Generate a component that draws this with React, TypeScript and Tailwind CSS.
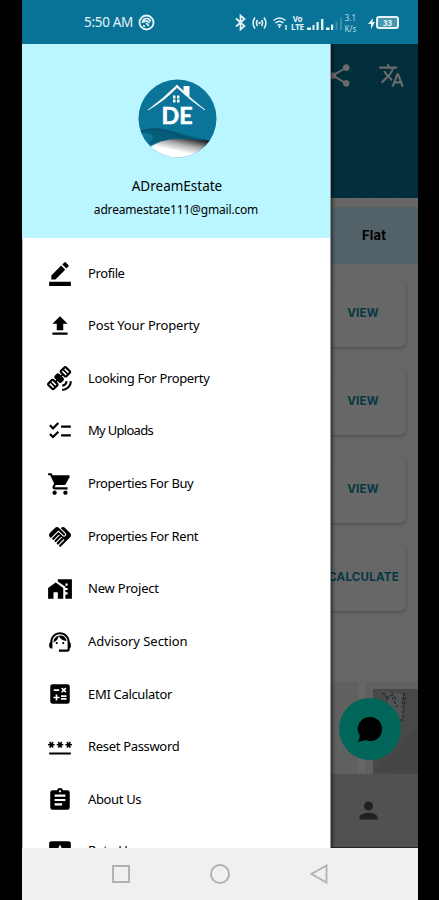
import type { ReactNode } from "react";
import type { IconType } from "react-icons";
import {
  MdBorderColor,
  MdUpload,
  MdSatelliteAlt,
  MdChecklist,
  MdShoppingCart,
  MdHandshake,
  MdHomeWork,
  MdSupportAgent,
  MdCalculate,
  MdPassword,
  MdAssignment,
  MdReviews,
  MdShare,
  MdTranslate,
  MdPerson,
} from "react-icons/md";

interface MenuItem {
  label: string;
  icon: IconType;
  tracking: string;
}

const menuItems: MenuItem[] = [
  { label: "Profile", icon: MdBorderColor, tracking: "tracking-[-0.4px]" },
  { label: "Post Your Property", icon: MdUpload, tracking: "tracking-[-0.15px]" },
  { label: "Looking For Property", icon: MdSatelliteAlt, tracking: "tracking-[-0.35px]" },
  { label: "My Uploads", icon: MdChecklist, tracking: "tracking-[-0.7px]" },
  { label: "Properties For Buy", icon: MdShoppingCart, tracking: "tracking-[-0.43px]" },
  { label: "Properties For Rent", icon: MdHandshake, tracking: "tracking-[-0.42px]" },
  { label: "New Project", icon: MdHomeWork, tracking: "tracking-[-0.2px]" },
  { label: "Advisory Section", icon: MdSupportAgent, tracking: "tracking-[-0.05px]" },
  { label: "EMI Calculator", icon: MdCalculate, tracking: "tracking-[-0.32px]" },
  { label: "Reset Password", icon: MdPassword, tracking: "tracking-[-0.32px]" },
  { label: "About Us", icon: MdAssignment, tracking: "tracking-[-0.35px]" },
  { label: "Rate Us", icon: MdReviews, tracking: "tracking-[-0.1px] pb-[3px]" },
];

const StatusBar = () => (
  <div className="relative h-11 w-full shrink-0 bg-[#087396] text-[#e6f3f6]">
    <div className="flex h-full items-center pt-[1px] pl-[62px]">
      <span className="w-[50px] text-[13.5px] tracking-[-0.3px] whitespace-nowrap">5:50 AM</span>
      <svg className="ml-[4px] size-[17px]" viewBox="0 0 17 17" fill="none" stroke="currentColor">
        <circle cx="8.5" cy="8.5" r="7" strokeWidth="1.8" />
        <path d="M4.500 9q0-4.500 4.500-4.500 3 0 3.500 3M5.500 8q3-2.500 6 1M8 9l3 3M5 11.500l2 1" strokeWidth="1.700" />
      </svg>
      <svg className="ml-[77px] size-[17px]" viewBox="0 0 17 17" fill="none" stroke="currentColor" strokeWidth="1.7">
        <path d="M4 4.500l8.500 7.500-4 3.500v-14l4 3.500L4 12.500" />
      </svg>
      <svg className="ml-[3px] h-[14px] w-[15px]" viewBox="0 0 15 14" fill="none" stroke="currentColor" strokeWidth="1.6">
        <path d="M3 1.5Q-.8 7 3 12.5M12 1.5Q15.800 7 12 12.500M5.500 4Q3.500 7 5.500 10M9.500 4Q11.500 7 9.500 10" />
        <circle cx="7.5" cy="7" r="1.2" fill="currentColor" stroke="none" />
      </svg>
      <svg className="ml-[6px] h-[14px] w-[15px]" viewBox="0 0 15 14" fill="none" stroke="currentColor" strokeWidth="1.4">
        <path d="M.5 4.500Q6.500-.5 12.500 4.500M2.500 7Q6.500 3.500 10.500 7M4.500 9.500Q6.500 8 8.500 9.500" />
        <path d="M6.500 10v2M13 9v5" />
      </svg>
      <div className="ml-[2px] w-[15px] text-center text-[8px] leading-[8px] font-bold tracking-[-0.2px]">
        <div>Vo</div>
        <div>LTE</div>
      </div>
      <svg className="mt-[2px] ml-[2px] h-[13px] w-[36px]" viewBox="0 0 36 13" fill="currentColor">
        <path d="M0 10.500h4V13H0zM5.500 8h2v5h-2zM9.500 5h2.200v8H9.500zM14 2h2.400v11H14zM19 10.500h3.500V13H19zM24 7.500h2.200V13H24z" />
        <path d="M28.500 4.500h2V13h-2zM33 1h2v12h-2z" opacity=".22" />
      </svg>
      <div className="w-[15px] text-center text-[8px] leading-[11px] opacity-80">
        <div>3.1</div>
        <div>K/s</div>
      </div>
      <svg className="ml-[10px] h-[14px] w-[8px]" viewBox="0 0 8 14" fill="currentColor">
        <path d="M5 2 0 8h3v5l4-7H4.500z" />
      </svg>
      <div className="flex h-[13px] w-[23px] items-center justify-center rounded-[3px] border-2 border-current bg-white/25 text-[8px] font-bold">
        33
      </div>
    </div>
  </div>
);

const Logo = () => (
  <svg className="ml-[2px] size-[79px]" viewBox="0 0 79 79">
    <defs>
      <clipPath id="badge">
        <circle cx="39.5" cy="39.5" r="39" />
      </clipPath>
      <linearGradient id="wave" x1="0.3" x2="1" y1="0.9" y2="0.1">
        <stop offset="0.3" stopColor="#fff" />
        <stop offset="0.6" stopColor="#aaa" />
        <stop offset="0.9" stopColor="#222" />
      </linearGradient>
    </defs>
    <g clipPath="url(#badge)">
      <rect width="79" height="79" fill="#0b7499" />
      <path d="M0 53Q14 46 34 52T79 63L70 68Q40 57 10 65Q24 54 0 53z" fill="#075c7a" />
      <path d="M3 52Q22 47 40 56T76 63" fill="none" stroke="#06506b" strokeWidth="1.2" />
      <path d="M10 69Q25 59 43 60T79 62V79H0z" fill="url(#wave)" />
    </g>
    <path d="M10 31Q25 20 39 6Q53 20 67 31Q53 22 39 8.500Q26 22 10 31z" fill="#fff" stroke="#fff" strokeWidth=".6" />
    <path d="M45.500 7h6v11l-6-6z" fill="#fff" />
    <path d="M35 16.500h2.500v3H35zM39 16.500h2.500v3H39zM35 20.500h2.500v3H35zM39 20.500h2.500v3H39z" fill="#fff" />
    <text x="39" y="44.5" textAnchor="middle" textLength="31" lengthAdjust="spacingAndGlyphs" fill="#fff" stroke="#fff" strokeWidth=".6" fontSize="23" fontWeight="700" fontFamily="Lato, sans-serif">
      DE
    </text>
  </svg>
);

const Drawer = () => (
  <div className="z-10 flex w-[309px] shrink-0 flex-col overflow-hidden border-r border-[#999] bg-white text-black shadow-[1px_0_4px_rgba(0,0,0,0.7)]">
    <div className="flex h-[194px] shrink-0 flex-col items-center bg-[#b9f6ff] pt-[35px]">
      <Logo />
      <div className="mt-[17px] ml-[2px] text-[13.5px] leading-[23px]">ADreamEstate</div>
      <div className="text-[12px] leading-[23px] tracking-[-0.17px]">adreamestate111@gmail.com</div>
    </div>
    <div className="flex shrink-0 flex-col border-l border-[#bbb] pt-[9px]">
      {menuItems.map(({ label, icon: Icon, tracking }) => (
        <div key={label} className="flex h-[52.65px] shrink-0 items-center pl-6">
          <Icon className="size-[26px] shrink-0" />
          <span className={`ml-[15px] text-[13px] whitespace-nowrap ${tracking}`}>{label}</span>
        </div>
      ))}
    </div>
  </div>
);

const Card = ({ children }: { children: ReactNode }) => (
  <div className="mb-[22px] flex h-[66px] w-[76px] shrink-0 items-center justify-end rounded-r-[7px] border-t border-r border-t-[#646464] border-r-[#5c5c5c] bg-[#676767] pb-[2px] text-[11.5px] font-bold tracking-[0.25px] text-[#053744] shadow-[0_2px_2px_rgba(0,0,0,0.15)]">
    {children}
  </div>
);

const HomePage = () => (
  <div className="relative flex min-w-0 flex-1 flex-col overflow-hidden bg-[#666] font-['Inter',sans-serif]">
    <div className="h-[154px] shrink-0 bg-[#022e3c] bg-[radial-gradient(#124351_0.5px,transparent_1px)] bg-[size:13px_11px]">
      <div className="flex items-center justify-between pt-[18px] pr-[13px] text-[#6b6b6b]">
        <MdShare className="-ml-[5px] size-[27px]" />
        <MdTranslate className="size-[27px]" />
      </div>
    </div>
    <div className="mt-[9px] flex h-[57px] shrink-0 items-center bg-[#526268] pl-[31px] text-[13px] font-bold tracking-[0.2px] text-black">
      Flat
    </div>
    <div className="flex shrink-0 flex-col pt-[17px]">
      <Card><span className="mr-[27px]">VIEW</span></Card>
      <Card><span className="mr-[27px]">VIEW</span></Card>
      <Card><span className="mr-[27px]">VIEW</span></Card>
      <Card><span className="mr-[7px]">CALCULATE</span></Card>
    </div>
    <div className="mt-[49px] flex h-[92px] shrink-0 gap-[7px]">
      <div className="w-[27px] bg-[#606060]" />
      <div className="flex-1 bg-[#606060] pt-[7px] pl-[8px]">
        <div className="h-full bg-[#484848]">
          <svg className="h-[85px] w-full" viewBox="0 0 46 85" preserveAspectRatio="none" fill="none">
            <path d="M13 3l17 2-1 25-11-5z" fill="#4f5555" />
            <path d="M10 4l6 5M14 11l4-5 7 12M19 4l5 7M31 4l2 4-3 23h-4M31 8l-2 10" stroke="#222" strokeWidth="1.100" strokeDasharray="3 1.500" />
            <path d="M2 83L46 37v48z" fill="#454545" />
          </svg>
        </div>
      </div>
    </div>
    <div className="flex flex-1 items-center justify-center border-b border-[#222] bg-[#515151] pr-[13px] text-[#202020]">
      <MdPerson className="size-[27px]" />
    </div>
    <div className="absolute top-[654px] left-[8px] flex size-[62px] items-center justify-center rounded-full bg-[#006659]">
      <svg className="size-[26px]" viewBox="0 0 26 26">
        <path d="M13.500 1A11.500 12 0 1 1 9 24L1 26l2-6A12 12 0 0 1 13.500 1z" fill="#000" />
      </svg>
    </div>
  </div>
);

const NavigationBar = () => (
  <div className="flex h-[52px] shrink-0 items-center justify-between bg-[#f0f0f0] pr-[90px] pl-[90px]">
    <div className="size-[18px] border-2 border-[#b2b2b2]" />
    <div className="size-[20px] rounded-full border-2 border-[#b2b2b2]" />
    <svg className="h-[20px] w-[18px]" viewBox="0 0 18 20" fill="none" stroke="#b2b2b2" strokeWidth="1.800">
      <path d="M16.500 1.500v17L1.500 10z" />
    </svg>
  </div>
);

export default function App() {
  return (
    <div className="h-[900px] w-[439px] overflow-hidden bg-black pl-[22px]">
      <div className="flex h-full w-[396px] flex-col overflow-hidden font-['Noto_Sans',sans-serif]">
        <StatusBar />
        <div className="flex min-h-0 flex-1 overflow-hidden">
          <Drawer />
          <HomePage />
        </div>
        <NavigationBar />
      </div>
    </div>
  );
}
